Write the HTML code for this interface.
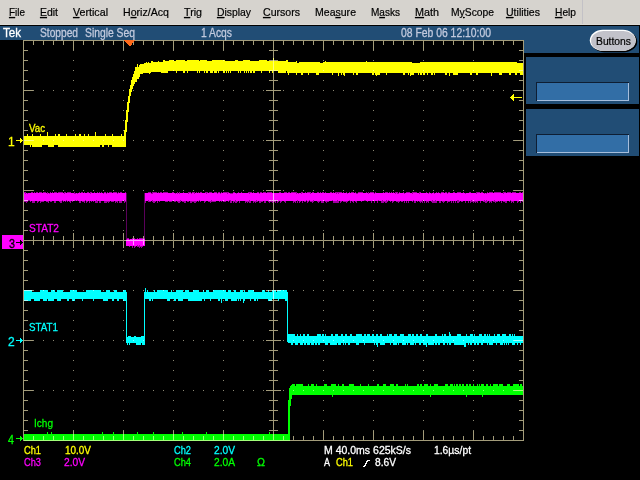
<!DOCTYPE html>
<html><head><meta charset="utf-8"><title>Tek</title>
<style>html,body{margin:0;padding:0;background:#000;overflow:hidden}svg{display:block}text{white-space:pre}</style>
</head><body><svg width="640" height="480" viewBox="0 0 640 480" shape-rendering="crispEdges" style="isolation:isolate"><rect x="0" y="0" width="640" height="480" fill="#000" />
<rect x="0" y="0" width="640" height="24" fill="#d6d3ce" />
<rect x="0" y="24" width="640" height="1" fill="#dcdad5" />
<rect x="0" y="25" width="640" height="1" fill="#000" />
<rect x="582" y="0" width="1" height="24" fill="#c3c1c6" />
<rect x="0" y="26" width="639" height="14" fill="#214d75" />
<rect x="524" y="40" width="115" height="13" fill="#214d75" />
<rect x="526" y="57" width="113" height="47" fill="#214d75" />
<rect x="526" y="109" width="113" height="47" fill="#214d75" />
<rect x="536" y="82" width="93" height="19" fill="#0e1e33" />
<rect x="537" y="83" width="92" height="18" fill="#a6bedc" />
<rect x="537" y="83" width="91" height="17" fill="#326ea6" />
<rect x="536" y="134" width="93" height="19" fill="#0e1e33" />
<rect x="537" y="135" width="92" height="18" fill="#a6bedc" />
<rect x="537" y="135" width="91" height="17" fill="#326ea6" />
<path d="M24 136h3v9h-3zM27 134h1v11h-1zM28 136h2v9h-2zM30 136h1v11h-1zM31 136h1v9h-1zM32 134h1v13h-1zM33 136h7v11h-7zM40 134h1v13h-1zM41 136h1v11h-1zM42 136h5v9h-5zM47 132h1v13h-1zM48 136h6v11h-6zM54 136h1v9h-1zM55 134h1v11h-1zM56 136h2v9h-2zM58 134h2v13h-2zM60 136h6v11h-6zM66 134h1v13h-1zM67 136h8v11h-8zM75 134h1v13h-1zM76 136h3v11h-3zM79 134h2v13h-2zM81 136h3v11h-3zM84 134h1v13h-1zM85 136h3v11h-3zM88 134h1v13h-1zM89 136h6v11h-6zM95 132h1v15h-1zM96 136h4v11h-4zM100 136h2v9h-2zM102 136h2v11h-2zM104 136h1v9h-1zM105 134h1v11h-1zM106 136h2v9h-2zM108 136h1v11h-1zM109 136h3v9h-3zM112 134h1v13h-1zM113 136h8v11h-8zM121 134h1v13h-1zM122 136h2v11h-2zM124 130h1v17h-1zM125 120h1v27h-1zM126 110h1v22h-1zM127 102h1v20h-1zM128 96h1v16h-1zM129 89h1v14h-1zM130 85h1v11h-1zM131 80h1v12h-1zM132 77h1v12h-1zM133 74h1v12h-1zM134 71h1v13h-1zM135 67h2v15h-2zM137 64h1v15h-1zM138 67h1v12h-1zM139 65h1v12h-1zM140 64h3v10h-3zM143 64h1v9h-1zM144 63h2v10h-2zM146 62h1v11h-1zM147 63h1v10h-1zM148 62h1v11h-1zM149 63h1v11h-1zM150 63h1v10h-1zM151 61h2v11h-2zM153 62h5v10h-5zM158 61h1v11h-1zM159 62h2v10h-2zM161 62h2v11h-2zM163 60h2v13h-2zM165 61h3v12h-3zM168 61h1v10h-1zM169 60h5v11h-5zM174 61h2v10h-2zM176 60h1v13h-1zM177 60h6v11h-6zM183 60h2v13h-2zM185 61h2v10h-2zM187 60h1v13h-1zM188 60h9v11h-9zM197 60h1v13h-1zM198 60h1v11h-1zM199 61h1v12h-1zM200 60h4v11h-4zM204 60h1v13h-1zM205 60h1v11h-1zM206 60h1v13h-1zM207 61h1v12h-1zM208 61h2v10h-2zM210 61h2v12h-2zM212 60h1v13h-1zM213 60h1v11h-1zM214 60h3v13h-3zM217 60h1v11h-1zM218 60h1v13h-1zM219 60h4v11h-4zM223 60h2v13h-2zM225 61h1v10h-1zM226 61h1v12h-1zM227 61h1v10h-1zM228 61h1v12h-1zM229 61h1v10h-1zM230 61h1v12h-1zM231 61h4v10h-4zM235 60h3v11h-3zM238 61h1v12h-1zM239 61h1v10h-1zM240 61h1v12h-1zM241 61h2v10h-2zM243 60h1v11h-1zM244 60h1v13h-1zM245 60h1v11h-1zM246 60h1v13h-1zM247 60h1v11h-1zM248 60h1v13h-1zM249 60h1v11h-1zM250 61h2v12h-2zM252 61h1v10h-1zM253 61h2v12h-2zM255 61h4v10h-4zM259 60h2v11h-2zM261 60h1v13h-1zM262 60h5v11h-5zM267 61h2v10h-2zM269 61h1v12h-1zM270 61h2v10h-2zM272 61h1v12h-1zM273 58h1v13h-1zM274 61h4v10h-4zM278 61h8v12h-8zM286 60h1v11h-1zM287 60h1v13h-1zM288 62h1v13h-1zM289 62h7v11h-7zM296 61h1v14h-1zM297 63h2v10h-2zM299 62h2v11h-2zM301 62h2v13h-2zM303 62h5v11h-5zM308 62h1v13h-1zM309 62h7v11h-7zM316 62h3v13h-3zM319 62h1v11h-1zM320 63h3v10h-3zM323 62h2v11h-2zM325 61h1v12h-1zM326 62h6v11h-6zM332 62h1v13h-1zM333 62h5v11h-5zM338 62h1v14h-1zM339 62h2v11h-2zM341 62h1v13h-1zM342 62h1v11h-1zM343 62h1v13h-1zM344 62h1v14h-1zM345 62h8v11h-8zM353 62h1v13h-1zM354 62h2v11h-2zM356 62h2v13h-2zM358 62h8v11h-8zM366 61h1v12h-1zM367 62h5v11h-5zM372 62h2v13h-2zM374 62h1v11h-1zM375 62h1v13h-1zM376 62h1v14h-1zM377 62h3v13h-3zM380 62h6v11h-6zM386 62h1v13h-1zM387 62h16v11h-16zM403 62h2v13h-2zM405 62h3v11h-3zM408 62h1v13h-1zM409 62h1v11h-1zM410 62h1v14h-1zM411 62h1v13h-1zM412 63h2v12h-2zM414 63h4v10h-4zM418 63h1v12h-1zM419 63h1v10h-1zM420 62h2v13h-2zM422 62h1v11h-1zM423 62h2v13h-2zM425 62h2v11h-2zM427 62h1v13h-1zM428 62h3v11h-3zM431 62h2v13h-2zM433 62h1v11h-1zM434 62h1v13h-1zM435 62h10v11h-10zM445 62h2v13h-2zM447 62h2v11h-2zM449 62h1v14h-1zM450 62h3v11h-3zM453 62h5v13h-5zM458 62h12v11h-12zM470 62h2v13h-2zM472 62h4v11h-4zM476 62h2v13h-2zM478 62h13v11h-13zM491 62h1v14h-1zM492 62h7v11h-7zM499 62h3v13h-3zM502 62h7v11h-7zM509 62h2v13h-2zM511 62h4v11h-4zM515 62h2v13h-2zM517 63h3v10h-3zM520 63h3v12h-3z" fill="#ffff00"/>
<path d="M126 193h1v50h-1zM144 193h1v50h-1z" fill="#5a005a"/>
<path d="M24 192h2v10h-2zM26 193h1v10h-1zM27 193h1v9h-1zM28 193h2v8h-2zM30 193h1v9h-1zM31 192h1v9h-1zM32 192h1v11h-1zM33 193h1v10h-1zM34 192h1v11h-1zM35 193h1v8h-1zM36 192h1v9h-1zM37 192h1v11h-1zM38 193h1v9h-1zM39 192h1v9h-1zM40 192h1v11h-1zM41 192h1v10h-1zM42 193h1v9h-1zM43 192h1v10h-1zM44 192h2v9h-2zM46 193h1v9h-1zM47 192h1v10h-1zM48 193h1v10h-1zM49 193h1v8h-1zM50 192h1v10h-1zM51 193h1v9h-1zM52 192h1v9h-1zM53 193h1v8h-1zM54 192h2v11h-2zM56 192h1v9h-1zM57 193h1v8h-1zM58 192h1v9h-1zM59 192h1v10h-1zM60 192h2v11h-2zM62 192h1v9h-1zM63 193h1v9h-1zM64 192h1v9h-1zM65 192h1v10h-1zM66 193h1v8h-1zM67 192h1v10h-1zM68 192h1v9h-1zM69 192h1v10h-1zM70 192h1v11h-1zM71 193h1v8h-1zM72 193h1v9h-1zM73 193h1v8h-1zM74 192h1v9h-1zM75 193h4v8h-4zM79 192h1v11h-1zM80 193h1v10h-1zM81 192h1v9h-1zM82 192h1v10h-1zM83 193h1v9h-1zM84 192h1v11h-1zM85 193h1v8h-1zM86 193h1v10h-1zM87 192h1v10h-1zM88 192h1v9h-1zM89 193h1v10h-1zM90 192h1v9h-1zM91 192h1v10h-1zM92 193h1v8h-1zM93 193h1v9h-1zM94 192h1v9h-1zM95 193h2v10h-2zM97 192h1v11h-1zM98 193h1v8h-1zM99 192h1v11h-1zM100 193h1v10h-1zM101 192h1v9h-1zM102 193h2v8h-2zM104 192h2v11h-2zM106 193h1v10h-1zM107 192h1v10h-1zM108 193h1v10h-1zM109 192h1v10h-1zM110 192h1v9h-1zM111 192h1v10h-1zM112 193h1v9h-1zM113 192h1v10h-1zM114 192h1v9h-1zM115 192h1v11h-1zM116 192h1v10h-1zM117 193h1v10h-1zM118 192h1v9h-1zM119 193h1v10h-1zM120 192h2v11h-2zM122 193h2v8h-2zM124 193h1v10h-1zM125 192h1v10h-1zM126 239h1v7h-1zM127 238h2v8h-2zM129 239h1v8h-1zM130 239h2v7h-2zM132 238h1v10h-1zM133 239h1v7h-1zM134 238h1v10h-1zM135 239h1v8h-1zM136 239h1v7h-1zM137 238h1v9h-1zM138 239h1v8h-1zM139 238h1v10h-1zM140 238h1v9h-1zM141 238h1v10h-1zM142 238h1v9h-1zM143 239h1v7h-1zM144 238h1v8h-1zM145 193h1v10h-1zM146 193h2v8h-2zM148 192h3v10h-3zM151 193h1v8h-1zM152 192h1v10h-1zM153 192h2v11h-2zM155 192h1v10h-1zM156 192h1v9h-1zM157 193h1v10h-1zM158 192h1v9h-1zM159 193h1v9h-1zM160 192h2v9h-2zM162 193h1v8h-1zM163 192h2v9h-2zM165 192h3v10h-3zM168 193h1v8h-1zM169 193h3v9h-3zM172 192h2v9h-2zM174 193h2v9h-2zM176 193h1v8h-1zM177 192h1v10h-1zM178 193h1v10h-1zM179 192h1v11h-1zM180 193h1v9h-1zM181 193h1v8h-1zM182 193h1v9h-1zM183 192h1v10h-1zM184 193h2v10h-2zM186 193h1v8h-1zM187 193h1v9h-1zM188 192h1v10h-1zM189 192h1v9h-1zM190 192h1v11h-1zM191 193h1v10h-1zM192 192h2v10h-2zM194 192h1v11h-1zM195 193h1v10h-1zM196 192h1v10h-1zM197 193h1v8h-1zM198 192h1v10h-1zM199 193h1v8h-1zM200 192h1v10h-1zM201 192h1v9h-1zM202 193h2v8h-2zM204 193h1v10h-1zM205 192h1v10h-1zM206 192h2v9h-2zM208 193h1v9h-1zM209 192h1v10h-1zM210 192h1v11h-1zM211 192h1v10h-1zM212 193h2v9h-2zM214 192h2v10h-2zM216 192h1v9h-1zM217 193h1v8h-1zM218 192h1v9h-1zM219 192h1v10h-1zM220 193h1v8h-1zM221 192h1v10h-1zM222 193h1v8h-1zM223 192h3v10h-3zM226 192h2v9h-2zM228 192h1v10h-1zM229 193h1v8h-1zM230 193h2v10h-2zM232 193h1v8h-1zM233 192h1v11h-1zM234 192h1v10h-1zM235 193h2v10h-2zM237 193h1v9h-1zM238 192h1v9h-1zM239 193h1v10h-1zM240 193h1v8h-1zM241 192h1v9h-1zM242 193h3v8h-3zM245 193h1v10h-1zM246 193h1v9h-1zM247 193h1v10h-1zM248 192h1v10h-1zM249 192h2v11h-2zM251 192h1v9h-1zM252 193h1v8h-1zM253 192h1v11h-1zM254 193h1v9h-1zM255 193h1v10h-1zM256 193h1v9h-1zM257 192h1v10h-1zM258 192h1v9h-1zM259 193h1v10h-1zM260 192h1v11h-1zM261 192h1v10h-1zM262 193h1v9h-1zM263 192h1v9h-1zM264 192h2v11h-2zM266 193h1v8h-1zM267 192h1v9h-1zM268 192h1v10h-1zM269 192h1v11h-1zM270 192h2v10h-2zM272 193h1v10h-1zM273 193h2v9h-2zM275 193h1v10h-1zM276 193h1v8h-1zM277 193h1v10h-1zM278 193h1v9h-1zM279 192h1v9h-1zM280 192h1v11h-1zM281 193h1v9h-1zM282 193h2v8h-2zM284 192h1v10h-1zM285 192h1v11h-1zM286 192h1v9h-1zM287 193h1v8h-1zM288 192h2v9h-2zM290 193h1v8h-1zM291 192h2v9h-2zM293 192h1v11h-1zM294 192h1v10h-1zM295 192h1v11h-1zM296 192h1v9h-1zM297 193h1v10h-1zM298 193h1v8h-1zM299 193h1v10h-1zM300 193h1v9h-1zM301 192h1v9h-1zM302 192h1v11h-1zM303 193h1v8h-1zM304 193h1v9h-1zM305 192h1v10h-1zM306 193h1v8h-1zM307 192h1v11h-1zM308 192h1v10h-1zM309 192h1v9h-1zM310 192h1v10h-1zM311 193h1v9h-1zM312 192h1v11h-1zM313 192h1v10h-1zM314 193h3v8h-3zM317 192h1v10h-1zM318 192h1v11h-1zM319 193h1v9h-1zM320 192h1v9h-1zM321 193h1v10h-1zM322 192h2v11h-2zM324 193h1v8h-1zM325 192h1v10h-1zM326 193h1v10h-1zM327 193h2v9h-2zM329 193h1v8h-1zM330 192h2v9h-2zM332 193h1v8h-1zM333 192h1v11h-1zM334 193h1v10h-1zM335 192h4v11h-4zM339 192h1v9h-1zM340 192h1v11h-1zM341 192h1v10h-1zM342 193h1v8h-1zM343 192h1v10h-1zM344 193h2v9h-2zM346 192h1v11h-1zM347 193h1v9h-1zM348 193h1v8h-1zM349 192h1v9h-1zM350 193h1v10h-1zM351 192h1v9h-1zM352 192h1v10h-1zM353 192h1v11h-1zM354 193h1v8h-1zM355 192h1v10h-1zM356 193h1v10h-1zM357 193h1v8h-1zM358 192h3v9h-3zM361 192h1v10h-1zM362 192h1v9h-1zM363 193h3v8h-3zM366 192h1v9h-1zM367 193h1v9h-1zM368 192h1v9h-1zM369 193h1v8h-1zM370 192h1v9h-1zM371 192h1v11h-1zM372 192h2v9h-2zM374 193h1v10h-1zM375 192h1v9h-1zM376 193h1v8h-1zM377 193h1v10h-1zM378 193h3v8h-3zM381 193h2v10h-2zM383 192h1v11h-1zM384 193h1v9h-1zM385 192h2v11h-2zM387 192h1v10h-1zM388 193h1v8h-1zM389 192h1v9h-1zM390 193h1v9h-1zM391 192h1v9h-1zM392 193h1v10h-1zM393 192h1v10h-1zM394 193h1v8h-1zM395 192h1v9h-1zM396 192h2v10h-2zM398 193h1v10h-1zM399 192h1v10h-1zM400 193h1v8h-1zM401 193h2v9h-2zM403 192h1v9h-1zM404 193h1v10h-1zM405 193h1v8h-1zM406 192h1v11h-1zM407 192h1v9h-1zM408 192h1v11h-1zM409 192h1v9h-1zM410 193h2v8h-2zM412 192h1v10h-1zM413 192h1v9h-1zM414 192h2v11h-2zM416 192h1v9h-1zM417 193h1v9h-1zM418 193h1v8h-1zM419 192h1v10h-1zM420 192h1v11h-1zM421 193h1v9h-1zM422 193h1v10h-1zM423 193h1v8h-1zM424 193h1v10h-1zM425 193h1v8h-1zM426 192h1v11h-1zM427 193h1v9h-1zM428 193h1v10h-1zM429 192h1v9h-1zM430 193h1v8h-1zM431 193h1v9h-1zM432 193h1v10h-1zM433 192h1v11h-1zM434 193h2v10h-2zM436 192h1v11h-1zM437 193h1v8h-1zM438 192h1v9h-1zM439 193h2v10h-2zM441 192h1v9h-1zM442 192h1v10h-1zM443 192h1v11h-1zM444 193h1v9h-1zM445 192h2v9h-2zM447 193h1v10h-1zM448 192h2v10h-2zM450 193h1v8h-1zM451 193h1v10h-1zM452 193h1v8h-1zM453 192h1v11h-1zM454 192h1v9h-1zM455 193h1v10h-1zM456 193h1v8h-1zM457 192h2v11h-2zM459 192h1v10h-1zM460 192h1v9h-1zM461 193h2v9h-2zM463 192h1v9h-1zM464 193h1v8h-1zM465 193h1v10h-1zM466 193h2v8h-2zM468 193h1v10h-1zM469 192h1v9h-1zM470 192h1v11h-1zM471 193h2v9h-2zM473 193h1v10h-1zM474 193h1v9h-1zM475 193h1v10h-1zM476 192h1v10h-1zM477 192h1v11h-1zM478 192h2v9h-2zM480 193h1v10h-1zM481 192h2v9h-2zM483 193h2v9h-2zM485 193h2v10h-2zM487 192h1v10h-1zM488 193h1v8h-1zM489 192h1v11h-1zM490 192h1v10h-1zM491 192h1v11h-1zM492 192h1v9h-1zM493 193h1v9h-1zM494 192h1v10h-1zM495 192h1v11h-1zM496 192h2v10h-2zM498 192h1v9h-1zM499 192h1v10h-1zM500 192h1v9h-1zM501 193h1v10h-1zM502 193h1v8h-1zM503 192h2v10h-2zM505 192h1v11h-1zM506 193h1v10h-1zM507 192h2v9h-2zM509 192h1v10h-1zM510 192h1v9h-1zM511 193h1v10h-1zM512 192h1v10h-1zM513 192h1v11h-1zM514 192h2v9h-2zM516 193h1v8h-1zM517 193h1v10h-1zM518 193h1v9h-1zM519 192h1v9h-1zM520 192h1v11h-1zM521 193h1v8h-1zM522 192h1v10h-1z" fill="#a000a0"/>
<path d="M24 193h1v8h-1zM25 194h1v7h-1zM26 193h1v8h-1zM27 194h1v7h-1zM28 193h2v7h-2zM30 193h17v8h-17zM47 194h1v7h-1zM48 193h1v8h-1zM49 194h1v7h-1zM50 193h12v8h-12zM62 193h1v7h-1zM63 193h1v8h-1zM64 194h1v7h-1zM65 193h1v8h-1zM66 193h1v7h-1zM67 193h6v8h-6zM73 193h1v7h-1zM74 194h1v7h-1zM75 194h1v6h-1zM76 193h1v8h-1zM77 194h1v6h-1zM78 193h7v8h-7zM85 193h1v7h-1zM86 193h4v8h-4zM90 194h1v7h-1zM91 193h5v8h-5zM96 193h1v7h-1zM97 193h6v8h-6zM103 194h1v7h-1zM104 193h2v8h-2zM106 194h1v7h-1zM107 193h10v8h-10zM117 194h1v7h-1zM118 193h6v8h-6zM124 193h1v7h-1zM125 193h1v8h-1zM126 240h1v6h-1zM127 239h2v7h-2zM129 240h1v6h-1zM130 239h7v7h-7zM137 239h1v6h-1zM138 239h1v7h-1zM139 239h1v6h-1zM140 239h5v7h-5zM145 193h3v8h-3zM148 193h1v7h-1zM149 193h2v8h-2zM151 194h1v7h-1zM152 194h1v6h-1zM153 193h22v8h-22zM175 194h1v7h-1zM176 193h1v8h-1zM177 194h1v7h-1zM178 193h1v8h-1zM179 194h1v7h-1zM180 193h1v7h-1zM181 193h7v8h-7zM188 194h1v7h-1zM189 193h2v8h-2zM191 194h1v7h-1zM192 193h2v8h-2zM194 194h1v7h-1zM195 193h4v8h-4zM199 193h1v7h-1zM200 193h6v8h-6zM206 194h1v7h-1zM207 193h4v8h-4zM211 193h1v7h-1zM212 193h5v8h-5zM217 194h1v7h-1zM218 193h2v8h-2zM220 194h1v7h-1zM221 193h6v8h-6zM227 194h1v7h-1zM228 193h1v8h-1zM229 193h1v7h-1zM230 194h1v6h-1zM231 194h2v7h-2zM233 193h2v8h-2zM235 193h1v7h-1zM236 194h1v7h-1zM237 193h12v8h-12zM249 194h1v6h-1zM250 193h6v8h-6zM256 193h1v7h-1zM257 193h2v8h-2zM259 194h1v7h-1zM260 193h11v8h-11zM271 193h1v7h-1zM272 193h4v8h-4zM276 193h1v7h-1zM277 193h19v8h-19zM296 194h1v7h-1zM297 193h1v7h-1zM298 194h1v7h-1zM299 193h2v8h-2zM301 194h1v7h-1zM302 193h4v8h-4zM306 193h1v7h-1zM307 193h2v8h-2zM309 193h1v7h-1zM310 194h1v7h-1zM311 193h2v8h-2zM313 193h1v7h-1zM314 193h18v8h-18zM332 193h1v7h-1zM333 193h3v8h-3zM336 194h1v7h-1zM337 193h1v7h-1zM338 194h1v7h-1zM339 193h8v8h-8zM347 194h1v7h-1zM348 193h1v8h-1zM349 193h1v7h-1zM350 193h6v8h-6zM356 194h2v7h-2zM358 193h6v8h-6zM364 193h2v7h-2zM366 193h2v8h-2zM368 194h1v7h-1zM369 193h5v8h-5zM374 194h1v7h-1zM375 193h3v8h-3zM378 193h1v7h-1zM379 193h3v8h-3zM382 193h1v7h-1zM383 193h3v8h-3zM386 193h1v7h-1zM387 193h1v8h-1zM388 193h1v7h-1zM389 193h6v8h-6zM395 194h1v7h-1zM396 193h1v8h-1zM397 194h2v7h-2zM399 193h5v8h-5zM404 194h1v7h-1zM405 193h7v8h-7zM412 194h1v7h-1zM413 193h1v7h-1zM414 193h5v8h-5zM419 194h1v7h-1zM420 193h2v8h-2zM422 193h1v7h-1zM423 193h5v8h-5zM428 194h1v7h-1zM429 193h2v8h-2zM431 194h1v7h-1zM432 193h1v7h-1zM433 193h1v8h-1zM434 194h1v7h-1zM435 193h1v7h-1zM436 193h4v8h-4zM440 194h1v7h-1zM441 193h6v8h-6zM447 194h1v7h-1zM448 193h9v8h-9zM457 193h2v7h-2zM459 193h6v8h-6zM465 194h1v7h-1zM466 193h5v8h-5zM471 193h1v7h-1zM472 193h4v8h-4zM476 194h1v7h-1zM477 193h7v8h-7zM484 194h1v6h-1zM485 193h1v8h-1zM486 194h1v6h-1zM487 193h7v8h-7zM494 193h1v7h-1zM495 193h8v8h-8zM503 194h1v7h-1zM504 193h6v8h-6zM510 193h1v7h-1zM511 193h12v8h-12z" fill="#ff00ff"/>
<path d="M24 290h7v11h-7zM31 290h1v9h-1zM32 292h2v7h-2zM34 292h6v9h-6zM40 290h3v9h-3zM43 290h4v11h-4zM47 290h1v9h-1zM48 292h3v9h-3zM51 290h3v11h-3zM54 290h1v9h-1zM55 292h2v7h-2zM57 290h4v11h-4zM61 290h2v9h-2zM63 292h4v7h-4zM67 292h2v9h-2zM69 292h1v7h-1zM70 290h2v9h-2zM72 290h3v11h-3zM75 290h2v9h-2zM77 292h5v7h-5zM82 292h1v9h-1zM83 292h3v7h-3zM86 290h7v9h-7zM93 290h1v11h-1zM94 290h7v9h-7zM101 292h2v7h-2zM103 292h3v9h-3zM106 290h2v11h-2zM108 290h2v9h-2zM110 292h2v7h-2zM112 292h2v9h-2zM114 290h3v9h-3zM117 292h2v9h-2zM119 292h4v7h-4zM123 290h3v11h-3zM126 337h1v6h-1zM127 337h1v8h-1zM128 336h1v7h-1zM129 336h1v9h-1zM130 336h1v7h-1zM131 337h3v6h-3zM134 336h2v7h-2zM136 337h5v8h-5zM141 336h1v7h-1zM142 336h2v9h-2zM144 337h1v8h-1zM145 288h1v11h-1zM146 292h1v7h-1zM147 290h1v9h-1zM148 292h1v7h-1zM149 292h2v9h-2zM151 292h1v7h-1zM152 292h1v9h-1zM153 292h1v7h-1zM154 290h1v9h-1zM155 292h2v7h-2zM157 290h10v9h-10zM167 290h1v11h-1zM168 292h2v9h-2zM170 292h1v7h-1zM171 290h1v9h-1zM172 292h2v7h-2zM174 292h2v9h-2zM176 290h2v9h-2zM178 290h5v11h-5zM183 292h2v7h-2zM185 290h3v9h-3zM188 290h1v11h-1zM189 292h4v9h-4zM193 290h6v11h-6zM199 292h3v9h-3zM202 292h1v7h-1zM203 290h1v9h-1zM204 292h1v9h-1zM205 292h1v7h-1zM206 290h3v9h-3zM209 292h1v7h-1zM210 292h1v9h-1zM211 292h2v7h-2zM213 290h5v9h-5zM218 290h2v11h-2zM220 290h1v9h-1zM221 290h1v13h-1zM222 290h3v9h-3zM225 290h1v11h-1zM226 292h2v9h-2zM228 290h3v9h-3zM231 292h3v9h-3zM234 290h2v11h-2zM236 292h1v9h-1zM237 292h1v7h-1zM238 292h1v9h-1zM239 292h1v7h-1zM240 290h1v11h-1zM241 290h2v9h-2zM243 292h1v11h-1zM244 290h1v11h-1zM245 292h3v7h-3zM248 290h2v9h-2zM250 290h1v11h-1zM251 290h3v9h-3zM254 292h2v9h-2zM256 292h1v7h-1zM257 292h1v9h-1zM258 292h4v7h-4zM262 290h3v9h-3zM265 292h3v7h-3zM268 290h1v11h-1zM269 292h3v9h-3zM272 290h4v9h-4zM276 292h1v7h-1zM277 290h1v9h-1zM278 290h1v11h-1zM279 290h6v9h-6zM285 290h2v11h-2zM287 292h1v9h-1zM288 334h3v9h-3zM291 334h2v11h-2zM293 334h2v9h-2zM295 336h2v9h-2zM297 334h1v11h-1zM298 336h2v7h-2zM300 334h1v11h-1zM301 336h2v9h-2zM303 334h1v9h-1zM304 334h1v11h-1zM305 336h1v9h-1zM306 336h1v7h-1zM307 334h2v11h-2zM309 336h1v9h-1zM310 336h1v7h-1zM311 336h3v9h-3zM314 336h1v7h-1zM315 336h2v9h-2zM317 334h1v9h-1zM318 334h2v11h-2zM320 334h1v9h-1zM321 336h1v7h-1zM322 334h2v9h-2zM324 336h1v7h-1zM325 334h1v11h-1zM326 336h2v9h-2zM328 336h2v7h-2zM330 336h1v9h-1zM331 334h2v11h-2zM333 336h2v9h-2zM335 334h2v11h-2zM337 334h1v9h-1zM338 336h3v9h-3zM341 334h2v9h-2zM343 336h1v9h-1zM344 336h1v7h-1zM345 334h1v11h-1zM346 334h1v9h-1zM347 336h1v7h-1zM348 336h2v9h-2zM350 334h2v9h-2zM352 336h4v7h-4zM356 334h3v11h-3zM359 334h3v9h-3zM362 336h2v7h-2zM364 334h1v11h-1zM365 334h1v9h-1zM366 336h1v7h-1zM367 334h3v9h-3zM370 336h2v7h-2zM372 334h2v9h-2zM374 336h1v9h-1zM375 336h1v7h-1zM376 334h1v11h-1zM377 334h1v13h-1zM378 336h2v7h-2zM380 334h2v11h-2zM382 336h3v9h-3zM385 336h2v7h-2zM387 334h1v9h-1zM388 336h1v7h-1zM389 334h1v9h-1zM390 334h1v11h-1zM391 334h1v9h-1zM392 336h1v7h-1zM393 336h1v9h-1zM394 334h3v11h-3zM397 336h1v7h-1zM398 336h1v9h-1zM399 336h1v7h-1zM400 334h2v9h-2zM402 334h2v11h-2zM404 336h2v9h-2zM406 336h1v7h-1zM407 336h1v9h-1zM408 334h2v9h-2zM410 334h1v11h-1zM411 336h1v9h-1zM412 334h2v11h-2zM414 336h1v7h-1zM415 336h1v9h-1zM416 334h2v9h-2zM418 336h1v7h-1zM419 336h1v9h-1zM420 334h1v11h-1zM421 334h1v9h-1zM422 336h1v7h-1zM423 336h3v9h-3zM426 334h1v13h-1zM427 334h1v9h-1zM428 336h6v9h-6zM434 336h1v7h-1zM435 334h2v11h-2zM437 336h1v7h-1zM438 336h2v9h-2zM440 336h2v7h-2zM442 334h1v9h-1zM443 336h1v9h-1zM444 334h1v11h-1zM445 334h1v9h-1zM446 336h1v7h-1zM447 336h1v9h-1zM448 336h1v7h-1zM449 332h1v13h-1zM450 334h1v11h-1zM451 336h3v7h-3zM454 336h3v9h-3zM457 334h4v11h-4zM461 336h3v9h-3zM464 336h2v11h-2zM466 334h1v9h-1zM467 336h1v7h-1zM468 336h1v9h-1zM469 336h1v7h-1zM470 334h2v11h-2zM472 334h1v9h-1zM473 336h1v7h-1zM474 334h1v11h-1zM475 336h1v9h-1zM476 336h1v7h-1zM477 336h2v9h-2zM479 334h2v9h-2zM481 334h1v11h-1zM482 336h1v9h-1zM483 336h1v7h-1zM484 334h2v9h-2zM486 336h1v7h-1zM487 334h1v11h-1zM488 336h1v7h-1zM489 334h1v11h-1zM490 336h3v9h-3zM493 336h1v7h-1zM494 334h1v9h-1zM495 336h1v7h-1zM496 336h1v9h-1zM497 334h3v9h-3zM500 336h2v9h-2zM502 334h1v11h-1zM503 334h1v9h-1zM504 334h1v11h-1zM505 334h1v9h-1zM506 336h1v9h-1zM507 336h1v7h-1zM508 336h1v9h-1zM509 334h2v9h-2zM511 336h1v7h-1zM512 334h1v11h-1zM513 336h1v9h-1zM514 334h1v11h-1zM515 336h2v7h-2zM517 336h1v9h-1zM518 336h2v7h-2zM520 336h1v9h-1zM521 336h2v7h-2zM126 292h1v50h-1zM144 292h1v50h-1zM287 292h1v50h-1z" fill="#00ffff"/>
<path d="M24 434h23v7h-23zM47 432h1v9h-1zM48 434h3v7h-3zM51 432h1v9h-1zM52 434h50v7h-50zM102 432h1v9h-1zM103 434h10v7h-10zM113 432h1v9h-1zM114 434h23v7h-23zM137 432h1v9h-1zM138 434h15v7h-15zM153 432h1v9h-1zM154 434h28v7h-28zM182 432h1v9h-1zM183 434h23v7h-23zM206 432h1v9h-1zM207 434h62v7h-62zM269 432h1v9h-1zM270 434h18v7h-18zM288 400h1v41h-1zM289 388h1v53h-1zM290 386h1v20h-1zM291 385h1v14h-1zM292 384h3v11h-3zM295 386h1v9h-1zM296 384h7v11h-7zM303 386h5v9h-5zM308 384h1v11h-1zM309 386h2v9h-2zM311 384h3v11h-3zM314 386h2v9h-2zM316 384h1v11h-1zM317 386h7v9h-7zM324 384h3v11h-3zM327 386h4v9h-4zM331 384h1v11h-1zM332 384h1v13h-1zM333 384h3v11h-3zM336 386h2v9h-2zM338 384h1v11h-1zM339 386h3v9h-3zM342 384h2v11h-2zM344 386h5v9h-5zM349 384h5v11h-5zM354 386h6v9h-6zM360 384h1v11h-1zM361 386h7v9h-7zM368 384h1v11h-1zM369 386h8v9h-8zM377 384h2v11h-2zM379 386h4v9h-4zM383 384h3v11h-3zM386 386h4v9h-4zM390 384h4v11h-4zM394 386h2v9h-2zM396 384h2v11h-2zM398 386h7v9h-7zM405 384h1v11h-1zM406 386h1v9h-1zM407 384h1v11h-1zM408 386h9v9h-9zM417 384h2v11h-2zM419 386h1v9h-1zM420 384h2v11h-2zM422 386h2v9h-2zM424 384h4v11h-4zM428 386h2v9h-2zM430 384h1v13h-1zM431 386h3v9h-3zM434 384h4v11h-4zM438 386h7v9h-7zM445 384h3v11h-3zM448 386h2v9h-2zM450 384h3v11h-3zM453 386h1v9h-1zM454 384h1v11h-1zM455 386h1v9h-1zM456 384h2v11h-2zM458 386h1v9h-1zM459 384h2v11h-2zM461 386h1v9h-1zM462 384h2v11h-2zM464 386h2v9h-2zM466 384h1v13h-1zM467 384h1v11h-1zM468 386h1v9h-1zM469 384h2v11h-2zM471 386h2v9h-2zM473 384h1v11h-1zM474 386h3v9h-3zM477 384h1v11h-1zM478 386h1v9h-1zM479 384h1v11h-1zM480 386h1v9h-1zM481 384h1v11h-1zM482 384h1v13h-1zM483 384h1v11h-1zM484 386h2v9h-2zM486 384h2v11h-2zM488 386h2v9h-2zM490 384h1v11h-1zM491 386h2v9h-2zM493 384h5v11h-5zM498 386h1v9h-1zM499 384h4v11h-4zM503 386h4v9h-4zM507 384h3v11h-3zM510 386h3v9h-3zM513 384h6v11h-6zM519 386h1v9h-1zM520 384h2v11h-2zM522 386h1v9h-1z" fill="#00ff00"/>
<g style="mix-blend-mode:screen"><path d="M23 40h501v1h-501zM23 440h501v1h-501zM23 40h1v401h-1zM523 40h1v401h-1zM23 240h501v1h-501zM273 40h1v401h-1zM33 40h1v5h-1zM33 436h1v5h-1zM33 236h1v9h-1zM43 40h1v5h-1zM43 436h1v5h-1zM43 236h1v9h-1zM53 40h1v5h-1zM53 436h1v5h-1zM53 236h1v9h-1zM63 40h1v5h-1zM63 436h1v5h-1zM63 236h1v9h-1zM73 40h1v11h-1zM73 430h1v11h-1zM73 233h1v15h-1zM83 40h1v5h-1zM83 436h1v5h-1zM83 236h1v9h-1zM93 40h1v5h-1zM93 436h1v5h-1zM93 236h1v9h-1zM103 40h1v5h-1zM103 436h1v5h-1zM103 236h1v9h-1zM113 40h1v5h-1zM113 436h1v5h-1zM113 236h1v9h-1zM123 40h1v11h-1zM123 430h1v11h-1zM123 233h1v15h-1zM133 40h1v5h-1zM133 436h1v5h-1zM133 236h1v9h-1zM143 40h1v5h-1zM143 436h1v5h-1zM143 236h1v9h-1zM153 40h1v5h-1zM153 436h1v5h-1zM153 236h1v9h-1zM163 40h1v5h-1zM163 436h1v5h-1zM163 236h1v9h-1zM173 40h1v11h-1zM173 430h1v11h-1zM173 233h1v15h-1zM183 40h1v5h-1zM183 436h1v5h-1zM183 236h1v9h-1zM193 40h1v5h-1zM193 436h1v5h-1zM193 236h1v9h-1zM203 40h1v5h-1zM203 436h1v5h-1zM203 236h1v9h-1zM213 40h1v5h-1zM213 436h1v5h-1zM213 236h1v9h-1zM223 40h1v11h-1zM223 430h1v11h-1zM223 233h1v15h-1zM233 40h1v5h-1zM233 436h1v5h-1zM233 236h1v9h-1zM243 40h1v5h-1zM243 436h1v5h-1zM243 236h1v9h-1zM253 40h1v5h-1zM253 436h1v5h-1zM253 236h1v9h-1zM263 40h1v5h-1zM263 436h1v5h-1zM263 236h1v9h-1zM273 40h1v11h-1zM273 430h1v11h-1zM273 233h1v15h-1zM283 40h1v5h-1zM283 436h1v5h-1zM283 236h1v9h-1zM293 40h1v5h-1zM293 436h1v5h-1zM293 236h1v9h-1zM303 40h1v5h-1zM303 436h1v5h-1zM303 236h1v9h-1zM313 40h1v5h-1zM313 436h1v5h-1zM313 236h1v9h-1zM323 40h1v11h-1zM323 430h1v11h-1zM323 233h1v15h-1zM333 40h1v5h-1zM333 436h1v5h-1zM333 236h1v9h-1zM343 40h1v5h-1zM343 436h1v5h-1zM343 236h1v9h-1zM353 40h1v5h-1zM353 436h1v5h-1zM353 236h1v9h-1zM363 40h1v5h-1zM363 436h1v5h-1zM363 236h1v9h-1zM373 40h1v11h-1zM373 430h1v11h-1zM373 233h1v15h-1zM383 40h1v5h-1zM383 436h1v5h-1zM383 236h1v9h-1zM393 40h1v5h-1zM393 436h1v5h-1zM393 236h1v9h-1zM403 40h1v5h-1zM403 436h1v5h-1zM403 236h1v9h-1zM413 40h1v5h-1zM413 436h1v5h-1zM413 236h1v9h-1zM423 40h1v11h-1zM423 430h1v11h-1zM423 233h1v15h-1zM433 40h1v5h-1zM433 436h1v5h-1zM433 236h1v9h-1zM443 40h1v5h-1zM443 436h1v5h-1zM443 236h1v9h-1zM453 40h1v5h-1zM453 436h1v5h-1zM453 236h1v9h-1zM463 40h1v5h-1zM463 436h1v5h-1zM463 236h1v9h-1zM473 40h1v11h-1zM473 430h1v11h-1zM473 233h1v15h-1zM483 40h1v5h-1zM483 436h1v5h-1zM483 236h1v9h-1zM493 40h1v5h-1zM493 436h1v5h-1zM493 236h1v9h-1zM503 40h1v5h-1zM503 436h1v5h-1zM503 236h1v9h-1zM513 40h1v5h-1zM513 436h1v5h-1zM513 236h1v9h-1zM23 50h5v1h-5zM519 50h5v1h-5zM269 50h9v1h-9zM23 60h5v1h-5zM519 60h5v1h-5zM269 60h9v1h-9zM23 70h5v1h-5zM519 70h5v1h-5zM269 70h9v1h-9zM23 80h5v1h-5zM519 80h5v1h-5zM269 80h9v1h-9zM23 90h11v1h-11zM513 90h11v1h-11zM266 90h15v1h-15zM23 100h5v1h-5zM519 100h5v1h-5zM269 100h9v1h-9zM23 110h5v1h-5zM519 110h5v1h-5zM269 110h9v1h-9zM23 120h5v1h-5zM519 120h5v1h-5zM269 120h9v1h-9zM23 130h5v1h-5zM519 130h5v1h-5zM269 130h9v1h-9zM23 140h11v1h-11zM513 140h11v1h-11zM266 140h15v1h-15zM23 150h5v1h-5zM519 150h5v1h-5zM269 150h9v1h-9zM23 160h5v1h-5zM519 160h5v1h-5zM269 160h9v1h-9zM23 170h5v1h-5zM519 170h5v1h-5zM269 170h9v1h-9zM23 180h5v1h-5zM519 180h5v1h-5zM269 180h9v1h-9zM23 190h11v1h-11zM513 190h11v1h-11zM266 190h15v1h-15zM23 200h5v1h-5zM519 200h5v1h-5zM269 200h9v1h-9zM23 210h5v1h-5zM519 210h5v1h-5zM269 210h9v1h-9zM23 220h5v1h-5zM519 220h5v1h-5zM269 220h9v1h-9zM23 230h5v1h-5zM519 230h5v1h-5zM269 230h9v1h-9zM23 240h11v1h-11zM513 240h11v1h-11zM266 240h15v1h-15zM23 250h5v1h-5zM519 250h5v1h-5zM269 250h9v1h-9zM23 260h5v1h-5zM519 260h5v1h-5zM269 260h9v1h-9zM23 270h5v1h-5zM519 270h5v1h-5zM269 270h9v1h-9zM23 280h5v1h-5zM519 280h5v1h-5zM269 280h9v1h-9zM23 290h11v1h-11zM513 290h11v1h-11zM266 290h15v1h-15zM23 300h5v1h-5zM519 300h5v1h-5zM269 300h9v1h-9zM23 310h5v1h-5zM519 310h5v1h-5zM269 310h9v1h-9zM23 320h5v1h-5zM519 320h5v1h-5zM269 320h9v1h-9zM23 330h5v1h-5zM519 330h5v1h-5zM269 330h9v1h-9zM23 340h11v1h-11zM513 340h11v1h-11zM266 340h15v1h-15zM23 350h5v1h-5zM519 350h5v1h-5zM269 350h9v1h-9zM23 360h5v1h-5zM519 360h5v1h-5zM269 360h9v1h-9zM23 370h5v1h-5zM519 370h5v1h-5zM269 370h9v1h-9zM23 380h5v1h-5zM519 380h5v1h-5zM269 380h9v1h-9zM23 390h11v1h-11zM513 390h11v1h-11zM266 390h15v1h-15zM23 400h5v1h-5zM519 400h5v1h-5zM269 400h9v1h-9zM23 410h5v1h-5zM519 410h5v1h-5zM269 410h9v1h-9zM23 420h5v1h-5zM519 420h5v1h-5zM269 420h9v1h-9zM23 430h5v1h-5zM519 430h5v1h-5zM269 430h9v1h-9z" fill="#a39c7a"/><path d="M73 50h1v1h-1zM73 60h1v1h-1zM73 70h1v1h-1zM73 80h1v1h-1zM73 90h1v1h-1zM73 100h1v1h-1zM73 110h1v1h-1zM73 120h1v1h-1zM73 130h1v1h-1zM73 140h1v1h-1zM73 150h1v1h-1zM73 160h1v1h-1zM73 170h1v1h-1zM73 180h1v1h-1zM73 190h1v1h-1zM73 200h1v1h-1zM73 210h1v1h-1zM73 220h1v1h-1zM73 230h1v1h-1zM73 240h1v1h-1zM73 250h1v1h-1zM73 260h1v1h-1zM73 270h1v1h-1zM73 280h1v1h-1zM73 290h1v1h-1zM73 300h1v1h-1zM73 310h1v1h-1zM73 320h1v1h-1zM73 330h1v1h-1zM73 340h1v1h-1zM73 350h1v1h-1zM73 360h1v1h-1zM73 370h1v1h-1zM73 380h1v1h-1zM73 390h1v1h-1zM73 400h1v1h-1zM73 410h1v1h-1zM73 420h1v1h-1zM73 430h1v1h-1zM123 50h1v1h-1zM123 60h1v1h-1zM123 70h1v1h-1zM123 80h1v1h-1zM123 90h1v1h-1zM123 100h1v1h-1zM123 110h1v1h-1zM123 120h1v1h-1zM123 130h1v1h-1zM123 140h1v1h-1zM123 150h1v1h-1zM123 160h1v1h-1zM123 170h1v1h-1zM123 180h1v1h-1zM123 190h1v1h-1zM123 200h1v1h-1zM123 210h1v1h-1zM123 220h1v1h-1zM123 230h1v1h-1zM123 240h1v1h-1zM123 250h1v1h-1zM123 260h1v1h-1zM123 270h1v1h-1zM123 280h1v1h-1zM123 290h1v1h-1zM123 300h1v1h-1zM123 310h1v1h-1zM123 320h1v1h-1zM123 330h1v1h-1zM123 340h1v1h-1zM123 350h1v1h-1zM123 360h1v1h-1zM123 370h1v1h-1zM123 380h1v1h-1zM123 390h1v1h-1zM123 400h1v1h-1zM123 410h1v1h-1zM123 420h1v1h-1zM123 430h1v1h-1zM173 50h1v1h-1zM173 60h1v1h-1zM173 70h1v1h-1zM173 80h1v1h-1zM173 90h1v1h-1zM173 100h1v1h-1zM173 110h1v1h-1zM173 120h1v1h-1zM173 130h1v1h-1zM173 140h1v1h-1zM173 150h1v1h-1zM173 160h1v1h-1zM173 170h1v1h-1zM173 180h1v1h-1zM173 190h1v1h-1zM173 200h1v1h-1zM173 210h1v1h-1zM173 220h1v1h-1zM173 230h1v1h-1zM173 240h1v1h-1zM173 250h1v1h-1zM173 260h1v1h-1zM173 270h1v1h-1zM173 280h1v1h-1zM173 290h1v1h-1zM173 300h1v1h-1zM173 310h1v1h-1zM173 320h1v1h-1zM173 330h1v1h-1zM173 340h1v1h-1zM173 350h1v1h-1zM173 360h1v1h-1zM173 370h1v1h-1zM173 380h1v1h-1zM173 390h1v1h-1zM173 400h1v1h-1zM173 410h1v1h-1zM173 420h1v1h-1zM173 430h1v1h-1zM223 50h1v1h-1zM223 60h1v1h-1zM223 70h1v1h-1zM223 80h1v1h-1zM223 90h1v1h-1zM223 100h1v1h-1zM223 110h1v1h-1zM223 120h1v1h-1zM223 130h1v1h-1zM223 140h1v1h-1zM223 150h1v1h-1zM223 160h1v1h-1zM223 170h1v1h-1zM223 180h1v1h-1zM223 190h1v1h-1zM223 200h1v1h-1zM223 210h1v1h-1zM223 220h1v1h-1zM223 230h1v1h-1zM223 240h1v1h-1zM223 250h1v1h-1zM223 260h1v1h-1zM223 270h1v1h-1zM223 280h1v1h-1zM223 290h1v1h-1zM223 300h1v1h-1zM223 310h1v1h-1zM223 320h1v1h-1zM223 330h1v1h-1zM223 340h1v1h-1zM223 350h1v1h-1zM223 360h1v1h-1zM223 370h1v1h-1zM223 380h1v1h-1zM223 390h1v1h-1zM223 400h1v1h-1zM223 410h1v1h-1zM223 420h1v1h-1zM223 430h1v1h-1zM323 50h1v1h-1zM323 60h1v1h-1zM323 70h1v1h-1zM323 80h1v1h-1zM323 90h1v1h-1zM323 100h1v1h-1zM323 110h1v1h-1zM323 120h1v1h-1zM323 130h1v1h-1zM323 140h1v1h-1zM323 150h1v1h-1zM323 160h1v1h-1zM323 170h1v1h-1zM323 180h1v1h-1zM323 190h1v1h-1zM323 200h1v1h-1zM323 210h1v1h-1zM323 220h1v1h-1zM323 230h1v1h-1zM323 240h1v1h-1zM323 250h1v1h-1zM323 260h1v1h-1zM323 270h1v1h-1zM323 280h1v1h-1zM323 290h1v1h-1zM323 300h1v1h-1zM323 310h1v1h-1zM323 320h1v1h-1zM323 330h1v1h-1zM323 340h1v1h-1zM323 350h1v1h-1zM323 360h1v1h-1zM323 370h1v1h-1zM323 380h1v1h-1zM323 390h1v1h-1zM323 400h1v1h-1zM323 410h1v1h-1zM323 420h1v1h-1zM323 430h1v1h-1zM373 50h1v1h-1zM373 60h1v1h-1zM373 70h1v1h-1zM373 80h1v1h-1zM373 90h1v1h-1zM373 100h1v1h-1zM373 110h1v1h-1zM373 120h1v1h-1zM373 130h1v1h-1zM373 140h1v1h-1zM373 150h1v1h-1zM373 160h1v1h-1zM373 170h1v1h-1zM373 180h1v1h-1zM373 190h1v1h-1zM373 200h1v1h-1zM373 210h1v1h-1zM373 220h1v1h-1zM373 230h1v1h-1zM373 240h1v1h-1zM373 250h1v1h-1zM373 260h1v1h-1zM373 270h1v1h-1zM373 280h1v1h-1zM373 290h1v1h-1zM373 300h1v1h-1zM373 310h1v1h-1zM373 320h1v1h-1zM373 330h1v1h-1zM373 340h1v1h-1zM373 350h1v1h-1zM373 360h1v1h-1zM373 370h1v1h-1zM373 380h1v1h-1zM373 390h1v1h-1zM373 400h1v1h-1zM373 410h1v1h-1zM373 420h1v1h-1zM373 430h1v1h-1zM423 50h1v1h-1zM423 60h1v1h-1zM423 70h1v1h-1zM423 80h1v1h-1zM423 90h1v1h-1zM423 100h1v1h-1zM423 110h1v1h-1zM423 120h1v1h-1zM423 130h1v1h-1zM423 140h1v1h-1zM423 150h1v1h-1zM423 160h1v1h-1zM423 170h1v1h-1zM423 180h1v1h-1zM423 190h1v1h-1zM423 200h1v1h-1zM423 210h1v1h-1zM423 220h1v1h-1zM423 230h1v1h-1zM423 240h1v1h-1zM423 250h1v1h-1zM423 260h1v1h-1zM423 270h1v1h-1zM423 280h1v1h-1zM423 290h1v1h-1zM423 300h1v1h-1zM423 310h1v1h-1zM423 320h1v1h-1zM423 330h1v1h-1zM423 340h1v1h-1zM423 350h1v1h-1zM423 360h1v1h-1zM423 370h1v1h-1zM423 380h1v1h-1zM423 390h1v1h-1zM423 400h1v1h-1zM423 410h1v1h-1zM423 420h1v1h-1zM423 430h1v1h-1zM473 50h1v1h-1zM473 60h1v1h-1zM473 70h1v1h-1zM473 80h1v1h-1zM473 90h1v1h-1zM473 100h1v1h-1zM473 110h1v1h-1zM473 120h1v1h-1zM473 130h1v1h-1zM473 140h1v1h-1zM473 150h1v1h-1zM473 160h1v1h-1zM473 170h1v1h-1zM473 180h1v1h-1zM473 190h1v1h-1zM473 200h1v1h-1zM473 210h1v1h-1zM473 220h1v1h-1zM473 230h1v1h-1zM473 240h1v1h-1zM473 250h1v1h-1zM473 260h1v1h-1zM473 270h1v1h-1zM473 280h1v1h-1zM473 290h1v1h-1zM473 300h1v1h-1zM473 310h1v1h-1zM473 320h1v1h-1zM473 330h1v1h-1zM473 340h1v1h-1zM473 350h1v1h-1zM473 360h1v1h-1zM473 370h1v1h-1zM473 380h1v1h-1zM473 390h1v1h-1zM473 400h1v1h-1zM473 410h1v1h-1zM473 420h1v1h-1zM473 430h1v1h-1zM33 90h1v1h-1zM43 90h1v1h-1zM53 90h1v1h-1zM63 90h1v1h-1zM83 90h1v1h-1zM93 90h1v1h-1zM103 90h1v1h-1zM113 90h1v1h-1zM133 90h1v1h-1zM143 90h1v1h-1zM153 90h1v1h-1zM163 90h1v1h-1zM183 90h1v1h-1zM193 90h1v1h-1zM203 90h1v1h-1zM213 90h1v1h-1zM233 90h1v1h-1zM243 90h1v1h-1zM253 90h1v1h-1zM263 90h1v1h-1zM283 90h1v1h-1zM293 90h1v1h-1zM303 90h1v1h-1zM313 90h1v1h-1zM333 90h1v1h-1zM343 90h1v1h-1zM353 90h1v1h-1zM363 90h1v1h-1zM383 90h1v1h-1zM393 90h1v1h-1zM403 90h1v1h-1zM413 90h1v1h-1zM433 90h1v1h-1zM443 90h1v1h-1zM453 90h1v1h-1zM463 90h1v1h-1zM483 90h1v1h-1zM493 90h1v1h-1zM503 90h1v1h-1zM513 90h1v1h-1zM33 140h1v1h-1zM43 140h1v1h-1zM53 140h1v1h-1zM63 140h1v1h-1zM83 140h1v1h-1zM93 140h1v1h-1zM103 140h1v1h-1zM113 140h1v1h-1zM133 140h1v1h-1zM143 140h1v1h-1zM153 140h1v1h-1zM163 140h1v1h-1zM183 140h1v1h-1zM193 140h1v1h-1zM203 140h1v1h-1zM213 140h1v1h-1zM233 140h1v1h-1zM243 140h1v1h-1zM253 140h1v1h-1zM263 140h1v1h-1zM283 140h1v1h-1zM293 140h1v1h-1zM303 140h1v1h-1zM313 140h1v1h-1zM333 140h1v1h-1zM343 140h1v1h-1zM353 140h1v1h-1zM363 140h1v1h-1zM383 140h1v1h-1zM393 140h1v1h-1zM403 140h1v1h-1zM413 140h1v1h-1zM433 140h1v1h-1zM443 140h1v1h-1zM453 140h1v1h-1zM463 140h1v1h-1zM483 140h1v1h-1zM493 140h1v1h-1zM503 140h1v1h-1zM513 140h1v1h-1zM33 190h1v1h-1zM43 190h1v1h-1zM53 190h1v1h-1zM63 190h1v1h-1zM83 190h1v1h-1zM93 190h1v1h-1zM103 190h1v1h-1zM113 190h1v1h-1zM133 190h1v1h-1zM143 190h1v1h-1zM153 190h1v1h-1zM163 190h1v1h-1zM183 190h1v1h-1zM193 190h1v1h-1zM203 190h1v1h-1zM213 190h1v1h-1zM233 190h1v1h-1zM243 190h1v1h-1zM253 190h1v1h-1zM263 190h1v1h-1zM283 190h1v1h-1zM293 190h1v1h-1zM303 190h1v1h-1zM313 190h1v1h-1zM333 190h1v1h-1zM343 190h1v1h-1zM353 190h1v1h-1zM363 190h1v1h-1zM383 190h1v1h-1zM393 190h1v1h-1zM403 190h1v1h-1zM413 190h1v1h-1zM433 190h1v1h-1zM443 190h1v1h-1zM453 190h1v1h-1zM463 190h1v1h-1zM483 190h1v1h-1zM493 190h1v1h-1zM503 190h1v1h-1zM513 190h1v1h-1zM33 290h1v1h-1zM43 290h1v1h-1zM53 290h1v1h-1zM63 290h1v1h-1zM83 290h1v1h-1zM93 290h1v1h-1zM103 290h1v1h-1zM113 290h1v1h-1zM133 290h1v1h-1zM143 290h1v1h-1zM153 290h1v1h-1zM163 290h1v1h-1zM183 290h1v1h-1zM193 290h1v1h-1zM203 290h1v1h-1zM213 290h1v1h-1zM233 290h1v1h-1zM243 290h1v1h-1zM253 290h1v1h-1zM263 290h1v1h-1zM283 290h1v1h-1zM293 290h1v1h-1zM303 290h1v1h-1zM313 290h1v1h-1zM333 290h1v1h-1zM343 290h1v1h-1zM353 290h1v1h-1zM363 290h1v1h-1zM383 290h1v1h-1zM393 290h1v1h-1zM403 290h1v1h-1zM413 290h1v1h-1zM433 290h1v1h-1zM443 290h1v1h-1zM453 290h1v1h-1zM463 290h1v1h-1zM483 290h1v1h-1zM493 290h1v1h-1zM503 290h1v1h-1zM513 290h1v1h-1zM33 340h1v1h-1zM43 340h1v1h-1zM53 340h1v1h-1zM63 340h1v1h-1zM83 340h1v1h-1zM93 340h1v1h-1zM103 340h1v1h-1zM113 340h1v1h-1zM133 340h1v1h-1zM143 340h1v1h-1zM153 340h1v1h-1zM163 340h1v1h-1zM183 340h1v1h-1zM193 340h1v1h-1zM203 340h1v1h-1zM213 340h1v1h-1zM233 340h1v1h-1zM243 340h1v1h-1zM253 340h1v1h-1zM263 340h1v1h-1zM283 340h1v1h-1zM293 340h1v1h-1zM303 340h1v1h-1zM313 340h1v1h-1zM333 340h1v1h-1zM343 340h1v1h-1zM353 340h1v1h-1zM363 340h1v1h-1zM383 340h1v1h-1zM393 340h1v1h-1zM403 340h1v1h-1zM413 340h1v1h-1zM433 340h1v1h-1zM443 340h1v1h-1zM453 340h1v1h-1zM463 340h1v1h-1zM483 340h1v1h-1zM493 340h1v1h-1zM503 340h1v1h-1zM513 340h1v1h-1zM33 390h1v1h-1zM43 390h1v1h-1zM53 390h1v1h-1zM63 390h1v1h-1zM83 390h1v1h-1zM93 390h1v1h-1zM103 390h1v1h-1zM113 390h1v1h-1zM133 390h1v1h-1zM143 390h1v1h-1zM153 390h1v1h-1zM163 390h1v1h-1zM183 390h1v1h-1zM193 390h1v1h-1zM203 390h1v1h-1zM213 390h1v1h-1zM233 390h1v1h-1zM243 390h1v1h-1zM253 390h1v1h-1zM263 390h1v1h-1zM283 390h1v1h-1zM293 390h1v1h-1zM303 390h1v1h-1zM313 390h1v1h-1zM333 390h1v1h-1zM343 390h1v1h-1zM353 390h1v1h-1zM363 390h1v1h-1zM383 390h1v1h-1zM393 390h1v1h-1zM403 390h1v1h-1zM413 390h1v1h-1zM433 390h1v1h-1zM443 390h1v1h-1zM453 390h1v1h-1zM463 390h1v1h-1zM483 390h1v1h-1zM493 390h1v1h-1zM503 390h1v1h-1zM513 390h1v1h-1z" fill="#8c8874"/></g>
<path d="M124 40h11.5l-5.75 6.5z" fill="#ff6a1a"/>
<path d="M510 97.5l4 -3.5v3h8v1h-8v3z" fill="#ffff00"/>
<rect x="2" y="235" width="21" height="14" fill="#ff00ff" />
<g font-family="Liberation Sans, Arial, sans-serif" stroke-width="0.3">
<text x="8" y="146" fill="#ffff00" stroke="#ffff00" font-size="12" >1</text>
<path d="M16 140h4v-2l3 2.5l-3 2.5v-2h-4z" fill="#ffff00"/>
<text x="9" y="248" fill="#000" stroke="#000" font-size="12" textLength="6" lengthAdjust="spacingAndGlyphs" >3</text>
<path d="M16 242h4v-2l3 2.5l-3 2.5v-2h-4z" fill="#000"/>
<text x="8" y="346" fill="#00ffff" stroke="#00ffff" font-size="12" >2</text>
<path d="M16 340h4v-2l3 2.5l-3 2.5v-2h-4z" fill="#00ffff"/>
<text x="8" y="444" fill="#00ff00" stroke="#00ff00" font-size="12" textLength="6" lengthAdjust="spacingAndGlyphs" >4</text>
<path d="M16 438h4v-2l3 2.5l-3 2.5v-2h-4z" fill="#00ff00"/>
<text x="29" y="132" fill="#ffff00" stroke="#ffff00" font-size="11" textLength="16" lengthAdjust="spacingAndGlyphs" >Vac</text>
<text x="29" y="232" fill="#ff00ff" stroke="#ff00ff" font-size="11" textLength="30" lengthAdjust="spacingAndGlyphs" >STAT2</text>
<text x="29" y="331" fill="#00ffff" stroke="#00ffff" font-size="11" textLength="29" lengthAdjust="spacingAndGlyphs" >STAT1</text>
<text x="34" y="427" fill="#00ff00" stroke="#00ff00" font-size="11" textLength="19" lengthAdjust="spacingAndGlyphs" >Ichg</text>
<text x="24" y="454" fill="#ffff00" stroke="#ffff00" font-size="11" textLength="17" lengthAdjust="spacingAndGlyphs" >Ch1</text>
<text x="65" y="454" fill="#ffff00" stroke="#ffff00" font-size="11" textLength="26" lengthAdjust="spacingAndGlyphs" >10.0V</text>
<text x="24" y="466" fill="#ff00ff" stroke="#ff00ff" font-size="11" textLength="17" lengthAdjust="spacingAndGlyphs" >Ch3</text>
<text x="64" y="466" fill="#ff00ff" stroke="#ff00ff" font-size="11" textLength="21" lengthAdjust="spacingAndGlyphs" >2.0V</text>
<text x="174" y="454" fill="#00ffff" stroke="#00ffff" font-size="11" textLength="17" lengthAdjust="spacingAndGlyphs" >Ch2</text>
<text x="214" y="454" fill="#00ffff" stroke="#00ffff" font-size="11" textLength="21" lengthAdjust="spacingAndGlyphs" >2.0V</text>
<text x="174" y="466" fill="#00ff00" stroke="#00ff00" font-size="11" textLength="17" lengthAdjust="spacingAndGlyphs" >Ch4</text>
<text x="214" y="466" fill="#00ff00" stroke="#00ff00" font-size="11" textLength="21" lengthAdjust="spacingAndGlyphs" >2.0A</text>
<text x="257" y="466" fill="#00ff00" stroke="#00ff00" font-size="11" textLength="8" lengthAdjust="spacingAndGlyphs" >Ω</text>
<text x="324" y="454" fill="#fff" stroke="#fff" font-size="11" textLength="87" lengthAdjust="spacingAndGlyphs" >M 40.0ms 625kS/s</text>
<text x="434" y="454" fill="#fff" stroke="#fff" font-size="11" textLength="37" lengthAdjust="spacingAndGlyphs" >1.6µs/pt</text>
<text x="324" y="466" fill="#fff" stroke="#fff" font-size="11" textLength="6" lengthAdjust="spacingAndGlyphs" >A</text>
<text x="336" y="466" fill="#ffff00" stroke="#ffff00" font-size="11" textLength="17" lengthAdjust="spacingAndGlyphs" >Ch1</text>
<path d="M362.5 466.5h2v-1h1v-2h1v-2h1v-1h2" stroke="#fff" fill="none" stroke-width="1"/>
<text x="375" y="466" fill="#fff" stroke="#fff" font-size="11" textLength="21" lengthAdjust="spacingAndGlyphs" >8.6V</text>
<text x="3" y="37" fill="#fff" stroke="#fff" font-size="12" textLength="18" lengthAdjust="spacingAndGlyphs" >Tek</text>
<text x="40" y="37" fill="#c2cade" stroke="#c2cade" font-size="12" textLength="38" lengthAdjust="spacingAndGlyphs" >Stopped</text>
<text x="85" y="37" fill="#c2cade" stroke="#c2cade" font-size="12" textLength="50" lengthAdjust="spacingAndGlyphs" >Single Seq</text>
<text x="201" y="37" fill="#c2cade" stroke="#c2cade" font-size="12" textLength="31" lengthAdjust="spacingAndGlyphs" >1 Acqs</text>
<text x="401" y="37" fill="#c2cade" stroke="#c2cade" font-size="12" textLength="90" lengthAdjust="spacingAndGlyphs" >08 Feb 06 12:10:00</text>
</g>
<g shape-rendering="geometricPrecision"><rect x="591.2" y="31.2" width="46" height="21" rx="13" ry="10.5" fill="#000"/>
<rect x="589.8" y="29.8" width="46" height="21" rx="13" ry="10.5" fill="#ffffff"/>
<rect x="591.1" y="31.1" width="44.6" height="19.6" rx="12.3" ry="9.8" fill="#c2c2ca"/></g>
<text x="596" y="45" fill="#000" stroke="#000" stroke-width="0.2" font-size="11" textLength="35" lengthAdjust="spacingAndGlyphs" font-family="Liberation Sans, Arial, sans-serif">Buttons</text>
<g font-family="Liberation Sans, Arial, sans-serif" font-size="11" fill="#000" stroke="#000" stroke-width="0.2">
<text x="9" y="16" textLength="16" lengthAdjust="spacingAndGlyphs"><tspan text-decoration="underline">F</tspan>ile</text>
<text x="40" y="16" textLength="18" lengthAdjust="spacingAndGlyphs"><tspan text-decoration="underline">E</tspan>dit</text>
<text x="73" y="16" textLength="35" lengthAdjust="spacingAndGlyphs"><tspan text-decoration="underline">V</tspan>ertical</text>
<text x="123" y="16" textLength="46" lengthAdjust="spacingAndGlyphs">H<tspan text-decoration="underline">o</tspan>riz/Acq</text>
<text x="184" y="16" textLength="18" lengthAdjust="spacingAndGlyphs"><tspan text-decoration="underline">T</tspan>rig</text>
<text x="217" y="16" textLength="34" lengthAdjust="spacingAndGlyphs"><tspan text-decoration="underline">D</tspan>isplay</text>
<text x="263" y="16" textLength="37" lengthAdjust="spacingAndGlyphs"><tspan text-decoration="underline">C</tspan>ursors</text>
<text x="315" y="16" textLength="41" lengthAdjust="spacingAndGlyphs">Mea<tspan text-decoration="underline">s</tspan>ure</text>
<text x="371" y="16" textLength="29" lengthAdjust="spacingAndGlyphs">M<tspan text-decoration="underline">a</tspan>sks</text>
<text x="415" y="16" textLength="24" lengthAdjust="spacingAndGlyphs"><tspan text-decoration="underline">M</tspan>ath</text>
<text x="451" y="16" textLength="43" lengthAdjust="spacingAndGlyphs">M<tspan text-decoration="underline">y</tspan>Scope</text>
<text x="506" y="16" textLength="34" lengthAdjust="spacingAndGlyphs"><tspan text-decoration="underline">U</tspan>tilities</text>
<text x="555" y="16" textLength="21" lengthAdjust="spacingAndGlyphs"><tspan text-decoration="underline">H</tspan>elp</text>
</g></svg></body></html>
